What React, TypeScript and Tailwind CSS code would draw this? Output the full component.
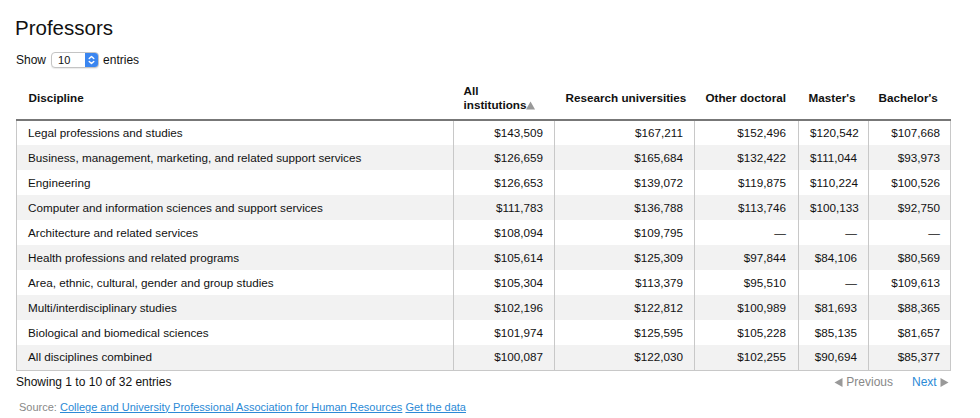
import React from "react";

const rows: [string, string, string, string, string, string][] = [
  ["Legal professions and studies", "$143,509", "$167,211", "$152,496", "$120,542", "$107,668"],
  ["Business, management, marketing, and related support services", "$126,659", "$165,684", "$132,422", "$111,044", "$93,973"],
  ["Engineering", "$126,653", "$139,072", "$119,875", "$110,224", "$100,526"],
  ["Computer and information sciences and support services", "$111,783", "$136,788", "$113,746", "$100,133", "$92,750"],
  ["Architecture and related services", "$108,094", "$109,795", "\u2014", "\u2014", "\u2014"],
  ["Health professions and related programs", "$105,614", "$125,309", "$97,844", "$84,106", "$80,569"],
  ["Area, ethnic, cultural, gender and group studies", "$105,304", "$113,379", "$95,510", "\u2014", "$109,613"],
  ["Multi/interdisciplinary studies", "$102,196", "$122,812", "$100,989", "$81,693", "$88,365"],
  ["Biological and biomedical sciences", "$101,974", "$125,595", "$105,228", "$85,135", "$81,657"],
  ["All disciplines combined", "$100,087", "$122,030", "$102,255", "$90,694", "$85,377"],
];

function Tri({ dir }: { dir: "up" | "left" | "right" }) {
  const d =
    dir === "up" ? "M4.5 0.5 L9 8.5 L0 8.5 Z" : dir === "left" ? "M0.5 4.5 L8.5 0 L8.5 9 Z" : "M8.5 4.5 L0.5 0 L0.5 9 Z";
  return (
    <svg width="9" height="9" viewBox="0 0 9 9" className="inline-block align-[-1px]">
      <path d={d} fill="#999" />
    </svg>
  );
}

export default function App() {
  return (
    <div className="w-[980px] h-[418px] bg-white text-[#111] overflow-hidden" style={{ fontFamily: '"Liberation Sans", Arial, sans-serif' }}>
      <div className="pl-[15px] pt-[15px] text-[20.5px] leading-[26px] text-[#111]">Professors</div>
      <div className="mt-[10px] ml-[16px] flex items-center h-[18px] text-[12px]">
        <span>Show</span>
        <div className="ml-[5px] mr-[4px] flex h-[16px] w-[48px] items-stretch rounded-[4px] border border-[#c4c4c4] bg-white shadow-[0_1px_1px_rgba(0,0,0,0.08)] overflow-hidden">
          <span className="flex-1 pl-[6px] text-[11px] leading-[14px]">10</span>
          <span className="w-[13px] bg-[#3b86f0] flex items-center justify-center">
            <svg width="7" height="10" viewBox="0 0 7 10" fill="none" stroke="white" strokeWidth="1.4" strokeLinecap="round" strokeLinejoin="round">
              <path d="M1.2 3.6 L3.5 1.4 L5.8 3.6" />
              <path d="M1.2 6.4 L3.5 8.6 L5.8 6.4" />
            </svg>
          </span>
        </div>
        <span>entries</span>
      </div>
      <div className="ml-[16px] mt-[13px] w-[934px]">
        <table className="table-fixed border-collapse w-[934px] text-[11.7px]">
          <colgroup>
            <col className="w-[437px]" />
            <col className="w-[101px]" />
            <col className="w-[140px]" />
            <col className="w-[104px]" />
            <col className="w-[70px]" />
            <col className="w-[82px]" />
          </colgroup>
          <thead>
            <tr className="h-[38px] border-b-2 border-[#777]">
              <th className="text-left font-bold px-[12px] pb-[6px] align-middle leading-[14px] whitespace-nowrap">Discipline</th>
              <th className="text-left font-bold px-[10px] pb-[6px] align-middle leading-[14px]">
                All institutions<Tri dir="up" />
              </th>
              <th className="text-left font-bold px-[11px] pb-[6px] align-middle leading-[14px] whitespace-nowrap">Research universities</th>
              <th className="text-left font-bold px-[11px] pb-[6px] align-middle leading-[14px] whitespace-nowrap">Other doctoral</th>
              <th className="text-left font-bold px-[10px] pb-[6px] align-middle leading-[14px] whitespace-nowrap">Master's</th>
              <th className="text-left font-bold px-[10px] pb-[6px] align-middle leading-[14px] whitespace-nowrap">Bachelor's</th>
            </tr>
          </thead>
          <tbody>
            {rows.map((r, i) => (
              <tr key={i} className={`h-[25px] ${i % 2 === 1 ? "bg-[#f2f2f2]" : "bg-white"} ${i === rows.length - 1 ? "border-b border-[#c8c8c8]" : ""}`}>
                <td className="border-x border-[#c8c8c8] px-[11px] leading-[14px] whitespace-nowrap">{r[0]}</td>
                <td className="border-x border-[#c8c8c8] px-[11px] text-right leading-[14px]">{r[1]}</td>
                <td className="border-x border-[#c8c8c8] px-[11px] text-right leading-[14px]">{r[2]}</td>
                <td className="border-x border-[#c8c8c8] px-[12px] text-right leading-[14px]">{r[3]}</td>
                <td className="border-x border-[#c8c8c8] px-[11px] text-right leading-[14px]">{r[4]}</td>
                <td className="border-x border-[#c8c8c8] px-[10px] text-right leading-[14px]">{r[5]}</td>
              </tr>
            ))}
          </tbody>
        </table>
        <div className="flex items-center justify-between h-[22px] text-[12px]">
          <span>Showing 1 to 10 of 32 entries</span>
          <div className="flex items-center mr-[1px]">
            <span className="text-[#888]"><Tri dir="left" /> Previous</span>
            <span className="ml-[19px] text-[#2b8ad6]">Next <Tri dir="right" /></span>
          </div>
        </div>
      </div>
      <div className="ml-[19px] mt-[7px] text-[11px] leading-[14px]">
        <span className="text-[#888]">Source: </span>
        <span className="text-[#2b8ad6] underline">College and University Professional Association for Human Resources</span>{" "}
        <span className="text-[#2b8ad6] underline">Get the data</span>
      </div>
    </div>
  );
}
